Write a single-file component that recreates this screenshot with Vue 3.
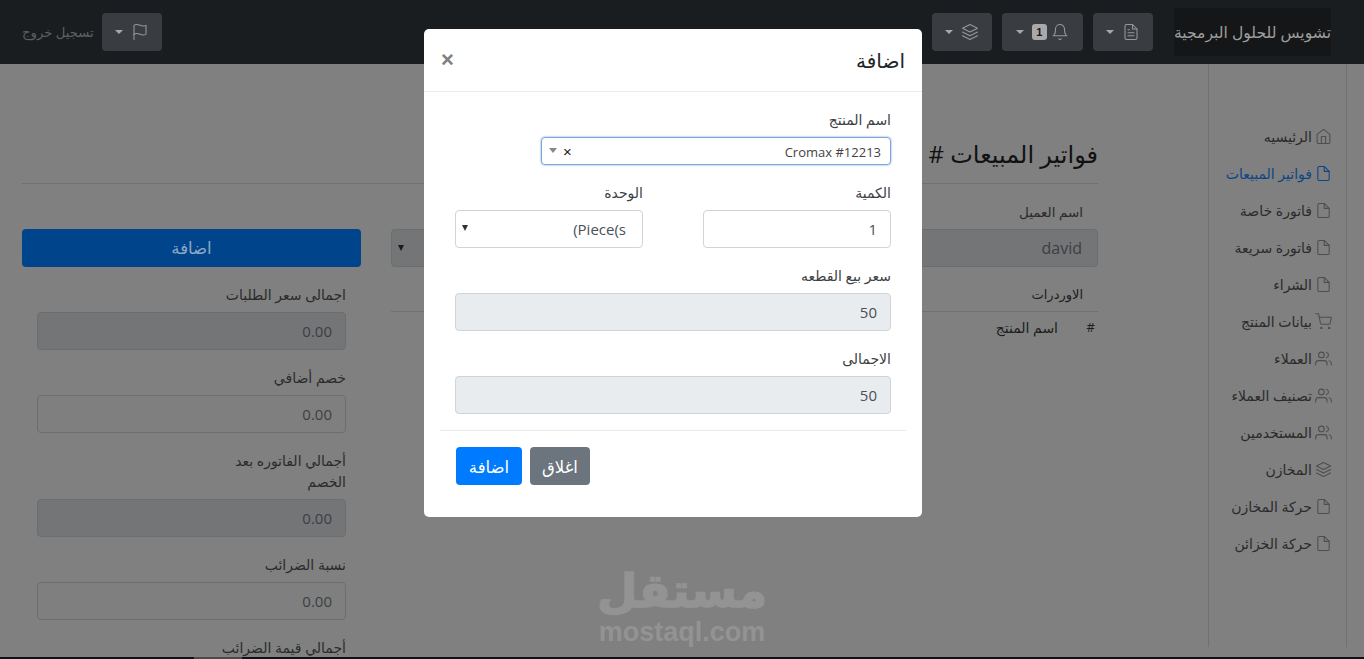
<script setup>
import { ref } from 'vue'

// feather icons, inner markup only
const icons = {
  home: '<path d="M3 9l9-7 9 7v11a2 2 0 0 1-2 2H5a2 2 0 0 1-2-2z"/><polyline points="9 22 9 12 15 12 15 22"/>',
  file: '<path d="M13 2H6a2 2 0 0 0-2 2v16a2 2 0 0 0 2 2h12a2 2 0 0 0 2-2V9z"/><polyline points="13 2 13 9 20 9"/>',
  fileText: '<path d="M14 2H6a2 2 0 0 0-2 2v16a2 2 0 0 0 2 2h12a2 2 0 0 0 2-2V8z"/><polyline points="14 2 14 8 20 8"/><line x1="16" y1="13" x2="8" y2="13"/><line x1="16" y1="17" x2="8" y2="17"/><polyline points="10 9 9 9 8 9"/>',
  layers: '<polygon points="12 2 2 7 12 12 22 7 12 2"/><polyline points="2 17 12 22 22 17"/><polyline points="2 12 12 17 22 12"/>',
  bell: '<path d="M18 8A6 6 0 0 0 6 8c0 7-3 9-3 9h18s-3-2-3-9"/><path d="M13.73 21a2 2 0 0 1-3.46 0"/>',
  cart: '<circle cx="9" cy="21" r="1"/><circle cx="20" cy="21" r="1"/><path d="M1 1h4l2.68 13.39a2 2 0 0 0 2 1.61h9.72a2 2 0 0 0 2-1.61L23 6H6"/>',
  users: '<path d="M17 21v-2a4 4 0 0 0-4-4H5a4 4 0 0 0-4 4v2"/><circle cx="9" cy="7" r="4"/><path d="M23 21v-2a4 4 0 0 0-3-3.87"/><path d="M16 3.13a4 4 0 0 1 0 7.75"/>',
  flag: '<path d="M4 15s1-1 4-1 5 2 8 2 4-1 4-1V3s-1 1-4 1-5-2-8-2-4 1-4 1z"/><line x1="4" y1="22" x2="4" y2="15"/>'
}

const navItems = ref([
  { label: 'الرئيسيه', icon: 'home' },
  { label: 'فواتير المبيعات', icon: 'file', active: true },
  { label: 'فاتورة خاصة', icon: 'file' },
  { label: 'فاتورة سريعة', icon: 'file' },
  { label: 'الشراء', icon: 'file' },
  { label: 'بيانات المنتج', icon: 'cart' },
  { label: 'العملاء', icon: 'users' },
  { label: 'تصنيف العملاء', icon: 'users' },
  { label: 'المستخدمين', icon: 'users' },
  { label: 'المخازن', icon: 'layers' },
  { label: 'حركة المخازن', icon: 'file' },
  { label: 'حركة الخزائن', icon: 'file' }
])

const totals = ref([
  { lines: ['اجمالى سعر الطلبات'], value: '0.00', readonly: true },
  { lines: ['خصم أضافي'], value: '0.00' },
  { lines: ['أجمالي الفاتوره بعد', 'الخصم'], value: '0.00', readonly: true },
  { lines: ['نسبة الضرائب'], value: '0.00' },
  { lines: ['أجمالي قيمة الضرائب'], value: '0.00', readonly: true }
])
</script>

<template>
  <div class="page" dir="rtl">
    <header class="topbar">
      <div class="brand">تشويس للحلول البرمجية</div>
      <div class="top-actions">
        <button class="top-btn">
          <svg class="ico" viewBox="0 0 24 24" v-html="icons.fileText"></svg>
          <span class="caret"></span>
        </button>
        <button class="top-btn bell-btn">
          <svg class="ico" viewBox="0 0 24 24" v-html="icons.bell"></svg>
          <span class="badge">1</span>
          <span class="caret"></span>
        </button>
        <button class="top-btn">
          <svg class="ico" viewBox="0 0 24 24" v-html="icons.layers"></svg>
          <span class="caret"></span>
        </button>
      </div>
      <div class="top-left">
        <button class="top-btn">
          <svg class="ico" viewBox="0 0 24 24" v-html="icons.flag"></svg>
          <span class="caret"></span>
        </button>
        <span class="logout">تسجيل خروج</span>
      </div>
    </header>

    <div class="layout">
      <nav class="sidebar">
        <a v-for="item in navItems" :key="item.label" class="nav-link" :class="{ active: item.active }">
          <svg class="ico" viewBox="0 0 24 24" v-html="icons[item.icon]"></svg>
          <span>{{ item.label }}</span>
        </a>
      </nav>

      <main class="content">
        <h1 class="title">فواتير المبيعات #</h1>
        <div class="columns">
          <section>
            <label class="lbl lbl-inset">اسم العميل</label>
            <div class="customer-row">
              <div class="input readonly big">david</div>
              <div class="input select"><span class="tri"></span></div>
            </div>
            <div class="orders-head">الاوردرات</div>
            <div class="orders-row">
              <span class="hash">#</span>
              <span>اسم المنتج</span>
            </div>
          </section>

          <aside>
            <button class="add-wide">اضافة</button>
            <div v-for="t in totals" :key="t.lines[0]" class="total-field">
              <label class="lbl">
                <template v-for="(line, i) in t.lines" :key="i">{{ line }}<br /></template>
              </label>
              <div class="input" :class="{ readonly: t.readonly }">{{ t.value }}</div>
            </div>
          </aside>
        </div>
      </main>
    </div>

    <div class="bottom-strip" dir="ltr"><span class="strip-thumb"></span></div>

    <div class="watermark" dir="ltr">
      <div class="wm-ar" dir="rtl">مستقل</div>
      <div class="wm-en">mostaql.com</div>
    </div>

    <div class="modal">
      <div class="modal-head">
        <h5>اضافة</h5>
        <span class="close">×</span>
      </div>
      <div class="modal-body">
        <label class="m-lbl">اسم المنتج</label>
        <div class="select2">
          <span class="s2-text">Cromax #12213</span>
          <span class="s2-clear">×</span>
          <span class="s2-arrow"></span>
        </div>

        <div class="two-col">
          <div>
            <label class="m-lbl">الكمية</label>
            <div class="m-input">1</div>
          </div>
          <div>
            <label class="m-lbl">الوحدة</label>
            <div class="m-input m-select">
              <span dir="ltr">(Piece(s</span>
              <span class="m-tri"></span>
            </div>
          </div>
        </div>

        <label class="m-lbl">سعر بيع القطعه</label>
        <div class="m-input m-ro">50</div>

        <label class="m-lbl">الاجمالى</label>
        <div class="m-input m-ro">50</div>
      </div>
      <div class="modal-foot">
        <button class="m-btn grey">اغلاق</button>
        <button class="m-btn blue">اضافة</button>
      </div>
    </div>
  </div>
</template>

<style>
html, body { margin: 0; overflow: hidden; }
</style>

<style scoped>
.page {
  position: relative;
  width: 1364px;
  height: 659px;
  overflow: hidden;
  display: flex;
  flex-direction: column;
  background: #808080;
  color: #1c1d1e;
  font-family: "Open Sans", "DejaVu Sans", sans-serif;
  font-size: 14px;
}
button { font-family: inherit; border: none; }

.topbar {
  height: 64px;
  flex: none;
  display: flex;
  align-items: center;
  background: #1a1d20;
  padding: 0 33px 0 22px;
}
.brand {
  width: 157px;
  height: 48px;
  display: flex;
  align-items: center;
  justify-content: center;
  white-space: nowrap;
  background: #141618;
  color: #9e9e9e;
  font-size: 15.6px;
}
.top-actions { display: flex; gap: 10px; margin-right: 21px; }
.top-left { margin-right: auto; display: flex; align-items: center; gap: 8px; }
.logout { color: #5e6062; font-size: 13.2px; white-space: nowrap; }
.top-btn {
  height: 38px;
  width: 60px;
  padding: 0;
  display: flex;
  align-items: center;
  justify-content: center;
  gap: 8px;
  background: #393d42;
  border-radius: 4px;
  color: #96989a;
}
.top-btn .ico { width: 18px; height: 18px; stroke-width: 1.4; }
.bell-btn { width: 81px; gap: 4.5px; }
.bell-btn .caret { margin-right: 3.5px; }
.ico {
  width: 17px;
  height: 17px;
  flex: none;
  fill: none;
  stroke: currentColor;
  stroke-width: 1.5;
  stroke-linecap: round;
  stroke-linejoin: round;
}
.caret {
  width: 0;
  height: 0;
  border-top: 4px solid #a6a8aa;
  border-left: 4.5px solid transparent;
  border-right: 4.5px solid transparent;
}
.badge {
  width: 15px;
  height: 16px;
  border-radius: 3px;
  background: #a9a9a9;
  color: #17191b;
  font: bold 11px/16px "Liberation Sans", sans-serif;
  text-align: center;
}

.layout { flex: 1; min-height: 0; display: flex; overflow: hidden; }
.sidebar {
  flex: none;
  width: 139px;
  margin-right: 17px;
  padding-top: 54px;
  border-left: 1px solid #707070;
  border-right: 1px solid #707070;
  box-sizing: border-box;
  height: 583px;
}
.nav-link {
  height: 37px;
  display: flex;
  align-items: center;
  gap: 3px;
  padding-right: 14px;
  color: #2a2b2c;
  font-size: 14px;
  white-space: nowrap;
}
.nav-link .ico { color: #4d4e4f; }
.nav-link.active, .nav-link.active .ico { color: #0e4585; }

.content {
  flex: 1;
  min-width: 0;
  padding: 72px 110px 0 22px;
  overflow: hidden;
}
.title {
  margin: 0;
  height: 47px;
  line-height: 36px;
  font-size: 24px;
  font-weight: 400;
  color: #101112;
  border-bottom: 1px solid #6f7071;
}
.columns {
  display: grid;
  grid-template-columns: 707px 339px;
  gap: 30px;
  padding-top: 18px;
}
.lbl {
  display: block;
  line-height: 21px;
  margin-bottom: 7px;
  font-size: 14px;
  color: #2a2b2c;
}
.lbl-inset { padding-right: 15px; margin-bottom: 6px; font-size: 13.5px; }
.input {
  height: 38px;
  box-sizing: border-box;
  border: 1px solid #6b6e71;
  border-radius: 4px;
  padding: 0 13px;
  line-height: 36px;
  font-size: 15px;
  color: #3c3f42;
  background: #7f7f7f;
}
.readonly { background: #747577; }
.customer-row { display: grid; grid-template-columns: 1fr 1fr; gap: 30px; }
.big { font-size: 16px; padding: 0 15px; }
.select { position: relative; background: #747577; }
.tri {
  position: absolute;
  left: 6px;
  top: 15px;
  border-top: 6px solid #1a1b1c;
  border-left: 3px solid transparent;
  border-right: 3px solid transparent;
}
.orders-head {
  margin-top: 17px;
  padding: 0 15px 6px;
  line-height: 21px;
  font-size: 13px;
  border-bottom: 1px solid #6f7071;
}
.orders-row {
  display: flex;
  gap: 31px;
  padding: 5px 3px 0 0;
  line-height: 21px;
  font-size: 14px;
}
.hash { width: 6px; font-size: 13px; }
.add-wide {
  display: block;
  width: 100%;
  height: 38px;
  padding: 0 0 1px;
  border-radius: 4px;
  background: #00458c;
  color: #8fa9c4;
  font-size: 16.5px;
  margin-top: 27px;
}
.total-field { margin-top: 17px; padding: 0 15px; }

.bottom-strip {
  position: absolute;
  left: 0;
  right: 0;
  bottom: 0;
  height: 2px;
  background: #0c1318;
}
.strip-thumb {
  display: block;
  width: 48px;
  height: 2px;
  margin-left: 194px;
  background: #4a4a4a;
}

.watermark {
  position: absolute;
  left: 597px;
  top: 560px;
  width: 170px;
  text-align: center;
  color: #939393;
  font-weight: 700;
  pointer-events: none;
}
.wm-ar {
  font: bold 46.5px/62px "DejaVu Sans", sans-serif;
  height: 58px;
  white-space: nowrap;
  -webkit-text-stroke: 1.5px #939393;
}
.wm-en { font: bold 27px/28px "Liberation Sans", sans-serif; white-space: nowrap; }

.modal {
  position: absolute;
  left: 424px;
  top: 29px;
  width: 498px;
  height: 488px;
  background: #fff;
  border-radius: 5px;
  color: #212529;
  display: flex;
  flex-direction: column;
}
.modal-head {
  height: 63px;
  box-sizing: border-box;
  flex: none;
  display: flex;
  align-items: center;
  justify-content: space-between;
  padding: 0 17px;
  border-bottom: 1px solid #e9ecef;
}
.modal-head h5 { margin: 0; font-size: 20px; font-weight: 400; }
.close {
  color: #808080;
  font: bold 22px/24px "Liberation Sans", sans-serif;
}
.modal-body { padding: 17px 31px 0; }
.m-lbl {
  display: block;
  line-height: 21px;
  margin-bottom: 7px;
  font-size: 14px;
  color: #3d4043;
}
.select2 {
  width: 350px;
  height: 28px;
  box-sizing: border-box;
  margin-bottom: 17px;
  padding: 1px 9px 0;
  display: flex;
  align-items: center;
  border: 1px solid #7da7d6;
  box-shadow: 0 0 2px #5b8fd0;
  border-radius: 4px;
  font-size: 13px;
  color: #444;
}
.s2-text { margin-left: auto; direction: ltr; }
.s2-clear { font: 15px/14px "Liberation Sans", sans-serif; color: #222; margin-left: 6px; }
.s2-arrow {
  margin-top: -2px;
  margin-left: -2px;
  border-top: 5px solid #888;
  border-left: 4px solid transparent;
  border-right: 4px solid transparent;
}
.two-col { display: grid; grid-template-columns: 188px 188px; gap: 60px; }
.m-input {
  height: 38px;
  box-sizing: border-box;
  margin-bottom: 17px;
  padding: 0 13px;
  border: 1px solid #ced4da;
  border-radius: 4px;
  line-height: 36px;
  font-size: 15px;
  color: #495057;
}
.m-ro { background: #e9ecef; }
.m-select { position: relative; padding-right: 16px; }
.m-tri {
  position: absolute;
  left: 6px;
  top: 14px;
  border-top: 6px solid #333;
  border-left: 3px solid transparent;
  border-right: 3px solid transparent;
}
.modal-foot {
  margin: -1px 16px 0;
  padding-top: 16px;
  border-top: 1px solid #e9ecef;
  display: flex;
  justify-content: flex-end;
  gap: 8px;
  padding-left: 16px;
}
.m-btn {
  height: 38px;
  padding: 0;
  border-radius: 4px;
  color: #fff;
  font-size: 16.5px;
}
.grey { width: 60px; background: #6c757d; }
.blue { width: 66px; background: #007bff; }
</style>
